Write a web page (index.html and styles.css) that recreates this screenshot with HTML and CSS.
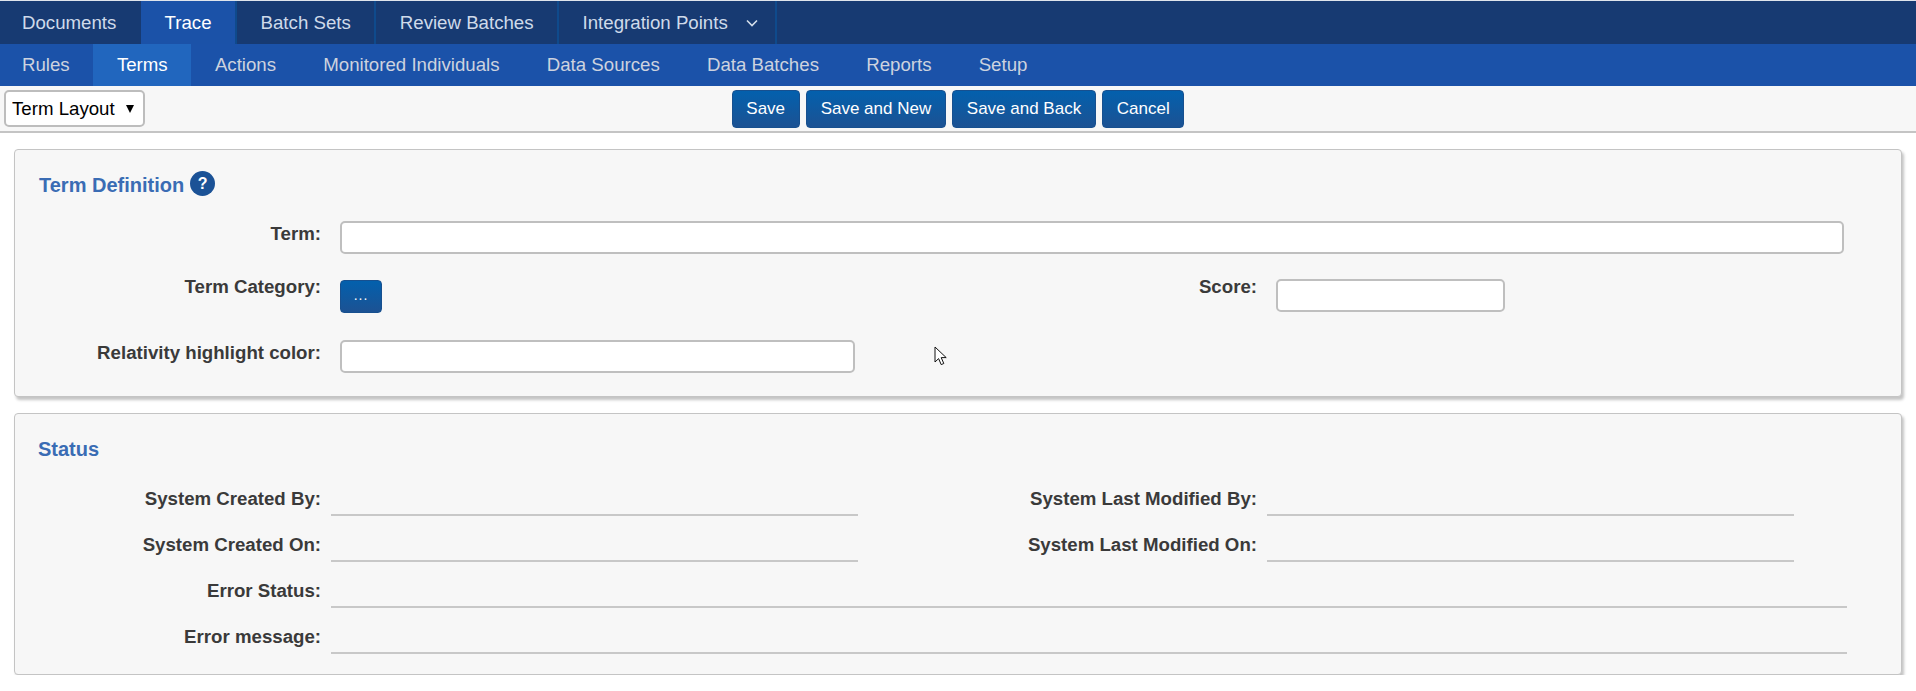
FILE: index.html
```html
<!DOCTYPE html>
<html lang="en">
  <head>
    <meta charset="UTF-8" />
    <meta name="viewport" content="width=device-width, initial-scale=1.0" />
    <title>Term Layout</title>
    <link rel="stylesheet" href="styles.css">
  </head>
  <body>
    <nav class="tabs">
      <a class="tab">Documents</a>
      <a class="tab active">Trace</a>
      <a class="tab">Batch Sets</a>
      <a class="tab">Review Batches</a>
      <a class="tab tab-more">Integration Points
        <svg class="chevron" width="12" height="8" viewBox="0 0 12 8"><path d="M1 1.5l5 5 5-5" fill="none" stroke="#d3ddea" stroke-width="1.6"/></svg>
      </a>
    </nav>
    <nav class="subtabs">
      <a class="subtab">Rules</a>
      <a class="subtab active">Terms</a>
      <a class="subtab">Actions</a>
      <a class="subtab">Monitored Individuals</a>
      <a class="subtab">Data Sources</a>
      <a class="subtab">Data Batches</a>
      <a class="subtab">Reports</a>
      <a class="subtab">Setup</a>
    </nav>

    <div class="toolbar">
      <div class="select-wrap">
        <select class="layout-select">
          <option>Term Layout</option>
        </select>
      </div>
      <div class="actions">
        <button class="btn">Save</button>
        <button class="btn">Save and New</button>
        <button class="btn">Save and Back</button>
        <button class="btn">Cancel</button>
      </div>
    </div>

    <main class="content">
      <section class="panel">
        <h2 class="panel-title">Term Definition <span class="help">?</span></h2>

        <div class="row row-term">
          <label class="label">Term:</label>
          <input class="input input-term" type="text" />
        </div>

        <div class="row row-category">
          <div class="half">
            <label class="label label-tight">Term Category:</label>
            <button class="btn btn-pick">...</button>
          </div>
          <div class="half">
            <label class="label label-tight">Score:</label>
            <input class="input input-score" type="text" />
          </div>
        </div>

        <div class="row">
          <label class="label">Relativity highlight color:</label>
          <input class="input input-color" type="text" />
        </div>

        <svg class="cursor" width="13" height="20" viewBox="0 0 13 20"><path d="M1 1v15l3.6-3.4 2.6 6 2.6-1.1-2.6-5.9h5z" fill="#fff" stroke="#111" stroke-width="1"/></svg>
      </section>

      <section class="panel panel-status">
        <h2 class="panel-title">Status</h2>

        <div class="read-row">
          <div class="half">
            <span class="label">System Created By:</span>
            <span class="value"></span>
          </div>
          <div class="half">
            <span class="label">System Last Modified By:</span>
            <span class="value"></span>
          </div>
        </div>
        <div class="read-row">
          <div class="half">
            <span class="label">System Created On:</span>
            <span class="value"></span>
          </div>
          <div class="half">
            <span class="label">System Last Modified On:</span>
            <span class="value"></span>
          </div>
        </div>
        <div class="read-row">
          <span class="label">Error Status:</span>
          <span class="value value-full"></span>
        </div>
        <div class="read-row">
          <span class="label">Error message:</span>
          <span class="value value-full"></span>
        </div>
      </section>
    </main>
  </body>
</html>
```

FILE: styles.css
```css
* {
  box-sizing: border-box;
}
body {
  font-family: "Liberation Sans", Arial, sans-serif;
  background-color: #fff;
  margin: 0;
  padding: 0;
  color: #3a3a3a;
}

/* top navigation */
.tabs {
  display: flex;
  height: 44px;
  background-color: #173a72;
  border-top: 1px solid #dfe4ec;
}
.tab {
  display: flex;
  align-items: center;
  padding: 0 23.5px;
  font-size: 18.67px;
  color: #cfdaea;
  border-right: 2px solid #0f4a8c;
}
.tab:first-child {
  padding: 0 24.7px 0 22px;
  border-right: none;
}
.tab.active {
  background-color: #1b52a8;
  color: #fff;
  border-right: 2px solid #0f4a8c;
}
.tab-more {
  padding-right: 17px;
}
.chevron {
  margin-left: 18px;
}

.subtabs {
  display: flex;
  height: 42px;
  padding-left: 22px;
  background-color: #1b52a9;
}
.subtab {
  display: flex;
  align-items: center;
  padding: 0 23.6px;
  font-size: 18.67px;
  color: #cdd3df;
}
.subtab:first-child {
  padding-left: 0;
}
.subtab.active {
  background-color: #2166be;
  color: #fff;
}

/* toolbar */
.toolbar {
  display: grid;
  grid-template-columns: 1fr auto 1fr;
  align-items: center;
  height: 47px;
  background-color: #f7f7f7;
  border-bottom: 2px solid #c4c4c4;
}
.select-wrap {
  position: relative;
  width: 141px;
  margin-left: 4px;
}
.select-wrap::after {
  content: "";
  position: absolute;
  right: 11px;
  top: 15px;
  border-left: 4px solid transparent;
  border-right: 4px solid transparent;
  border-top: 8px solid #000;
}
.layout-select {
  appearance: none;
  width: 100%;
  height: 37px;
  padding: 0 0 0 6px;
  font-family: inherit;
  font-size: 18.67px;
  color: #000;
  background-color: #fff;
  border: 2px solid #bdbdbd;
  border-radius: 5px;
}
.actions {
  display: flex;
  gap: 6px;
}
.btn {
  height: 38px;
  padding: 0 13.8px;
  font-family: inherit;
  font-size: 17px;
  color: #fff;
  background: linear-gradient(#0360ad, #1c5293);
  border: 1px solid #17508f;
  border-radius: 4px;
}

/* panels */
.content {
  padding: 16px 14px 0;
}
.panel {
  position: relative;
  height: 248px;
  padding: 21px 0 0;
  background-color: #f7f7f7;
  border: 1px solid #c4c4c4;
  border-radius: 4px;
  box-shadow: 2px 3px 3px #c4c4c4;
}
.panel-status {
  height: 262px;
  margin-top: 16px;
  padding-top: 23px;
}
.panel-title {
  display: flex;
  align-items: center;
  gap: 6px;
  height: 25px;
  margin: 0 0 25px;
  padding: 3px 0 0 24px;
  font-size: 20px;
  font-weight: bold;
  color: #3a6cb4;
}
.panel-status .panel-title {
  margin-bottom: 8px;
  padding: 0 0 0 23px;
}
.help {
  width: 25px;
  height: 25px;
  margin-top: -3px;
  font-size: 16px;
  line-height: 25px;
  text-align: center;
  color: #fff;
  background-color: #1b5296;
  border-radius: 50%;
}

.row {
  display: flex;
  margin-bottom: 25px;
}
.row-category {
  margin-bottom: 27px;
}
.half {
  display: flex;
  width: 936px;
}
.label {
  flex: none;
  width: 306px;
  margin-right: 19px;
  font-size: 18.67px;
  font-weight: bold;
  line-height: 25px;
  text-align: right;
}
.row-term .label {
  line-height: 26px;
}
.label-tight {
  line-height: 15px;
}
.input {
  height: 33px;
  background-color: #fff;
  border: 2px solid #bfbfbf;
  border-radius: 5px;
}
.input-term {
  width: 1504px;
}
.input-score {
  width: 229px;
}
.input-color {
  width: 515px;
}
.btn-pick {
  width: 42px;
  height: 33px;
  margin-top: 1px;
  padding: 0 0 4px;
  font-size: 14px;
  letter-spacing: 1px;
}
.cursor {
  position: absolute;
  left: 919px;
  top: 196px;
}

/* read only rows */
.read-row {
  display: flex;
  height: 46px;
  align-items: flex-end;
}
.read-row .half {
  align-items: flex-end;
}
.read-row .label {
  margin-right: 10px;
  line-height: 22px;
  padding-bottom: 6px;
}
.value {
  width: 527px;
  height: 2px;
  background-color: #c8c8c8;
}
.value-full {
  width: 1516px;
}
```
